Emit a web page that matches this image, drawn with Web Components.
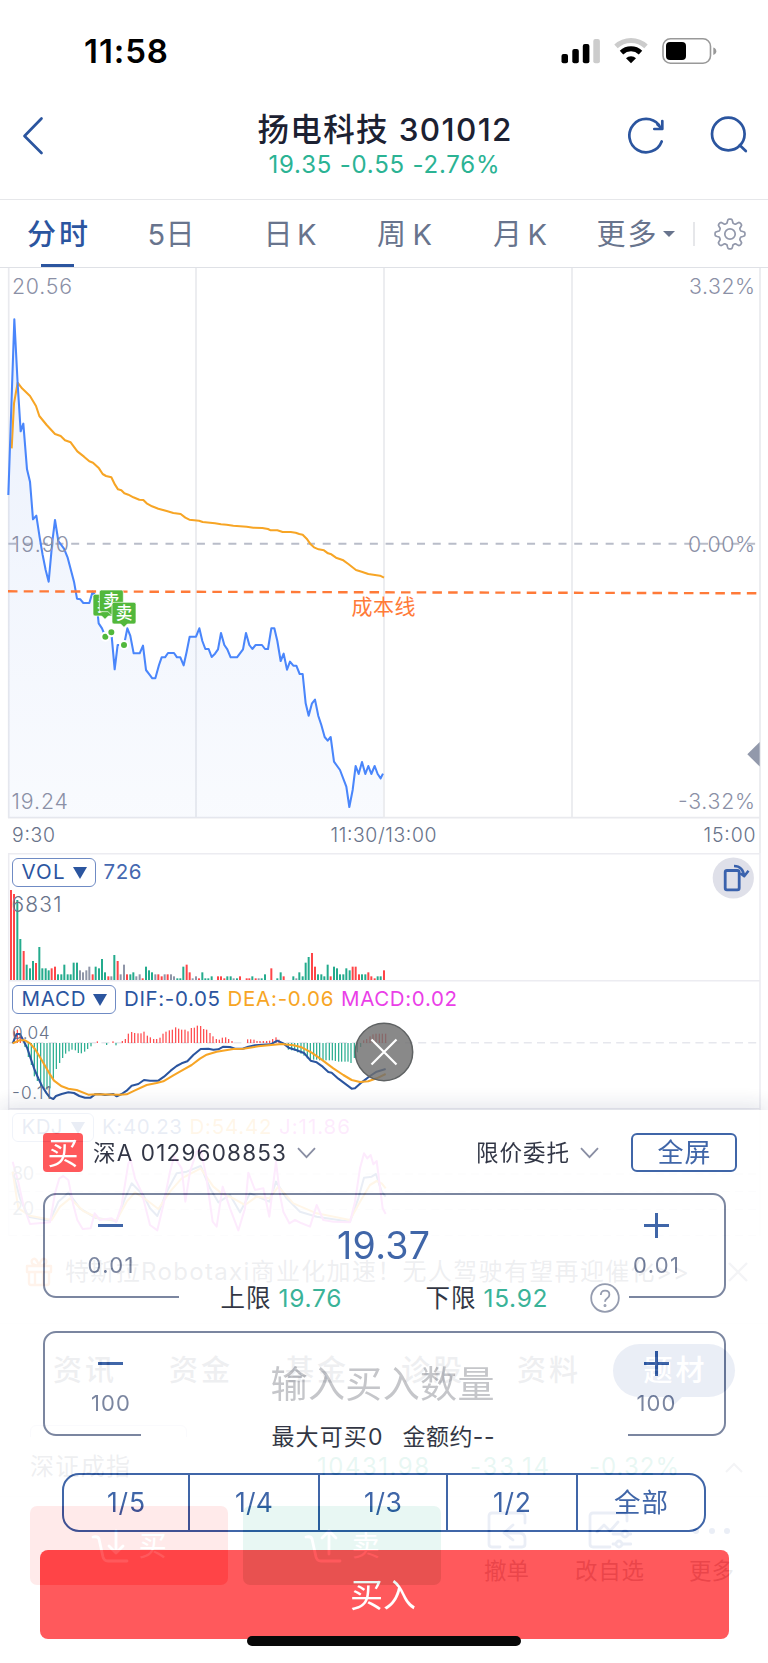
<!DOCTYPE html>
<html lang="zh-CN">
<head>
<meta charset="utf-8">
<title>扬电科技 301012</title>
<style>
	body {
		margin: 0;
		background: #fff;
		font-family: Inter, "Noto Sans CJK SC", sans-serif;
		line-height: 1;
	}
</style>
</head>
<body>
<stock-screen></stock-screen>

<script>
const define = (name, cls) => {
	if (!window.customElements.get(name)) {
		window.customElements.define(name, cls);
	}
};

// small base class: markup() goes in an open shadow root
class Part extends HTMLElement {
	constructor() {
		super();
		this.attachShadow({ mode: 'open' });
	}

	connectedCallback() {
		this.shadowRoot.innerHTML = this.markup();
	}
}

// one line of text, tracked so that it fills the width in `w`
define('fit-text', class extends Part {
	markup() {
		return `
		<style>
		:host { display: inline-block; white-space: nowrap; flex: none; }
		</style>
		<span><slot></slot></span>`;
	}

	connectedCallback() {
		super.connectedCallback();
		const w = Number(this.getAttribute('w'));
		const count = [...this.textContent].length;
		const span = this.shadowRoot.querySelector('span');
		if (w && count > 1) {
			const natural = span.getBoundingClientRect().width;
			span.style.letterSpacing = (w - natural) / (count - 1) + 'px';
			this.style.width = w + 'px';
		}
	}
});

define('status-bar', class extends Part {
	markup() {
		return `
		<style>
		:host { display: flex; align-items: center; height: 102px; padding: 0 51px 0 84px; box-sizing: border-box; }
		fit-text { font-size: 33px; font-weight: 600; color: #000; }
		svg { margin-left: auto; }
		</style>
		<fit-text w="84">11:58</fit-text>
		<svg width="156" height="28" viewBox="561 37 156 28">
			<rect x="561.5" y="54" width="6.5" height="9.3" rx="2"/>
			<rect x="572.3" y="49" width="6.5" height="14.3" rx="2"/>
			<rect x="582.8" y="44" width="6.6" height="19.3" rx="2"/>
			<rect x="593.3" y="39" width="6.6" height="24.3" rx="2" fill="#ccc"/>
			<g fill="none">
				<path d="M616 46.3a22 22 0 0 1 30 0" stroke="#ccc" stroke-width="5"/>
				<path d="M621.5 52.6a13.8 13.8 0 0 1 19 0" stroke="#000" stroke-width="5"/>
			</g>
			<path d="M631 63.3l-5-5a7 7 0 0 1 10 0z"/>
			<rect x="663" y="38.8" width="47.5" height="24.4" rx="7.5" fill="none" stroke="#999" stroke-width="1.6"/>
			<rect x="666" y="42" width="20" height="18" rx="4"/>
			<path d="M713.3 47.5q3 1 3 3.7t-3 3.7z" fill="#999"/>
		</svg>`;
	}
});

define('quote-header', class extends Part {
	markup() {
		return `
		<style>
		:host { display: grid; grid-template-columns: 1fr auto 1fr; height: 98px; padding: 10px 20px 0 21px; box-sizing: border-box; border-bottom: 1.5px solid #e6e7ea; }
		.title { display: grid; justify-items: center; grid-auto-rows: 35px; align-items: center; }
		.name { font-size: 31.5px; font-weight: 500; color: #1c2132; }
		.quote { font-size: 24px; color: #2bb394; margin-right: 1px; }
		.icons { justify-self: end; display: flex; gap: 44px; }
		svg { display: block; fill: none; stroke: #2b559f; stroke-width: 2.7; stroke-linecap: round; stroke-linejoin: round; }
		</style>
		<svg width="24" height="46" viewBox="21 112 24 46"><path d="M41.5 118.5L24.5 136l17 17"/></svg>
		<div class="title">
			<fit-text class="name" w="254">扬电科技 301012</fit-text>
			<fit-text class="quote" w="231">19.35 -0.55 -2.76%</fit-text>
		</div>
		<div class="icons">
			<svg width="38" height="46" viewBox="628 112 38 46">
				<path d="M661.7 141.5a16.7 16.7 0 1 1-2.8-16.6M662.3 121v8h-8M657.5 124.5l4.5 4"/>
			</svg>
			<svg width="38" height="46" viewBox="710 112 38 46">
				<circle cx="728.3" cy="134" r="16.3"/><path d="M739.8 145.3l6 5.7"/>
			</svg>
		</div>`;
	}
});

define('period-tabs', class extends Part {
	markup() {
		let teeth = '';
		for (let i = 0; i <= 96; i++) {
			const a = i / 96 * Math.PI * 2;
			const r = 13 + 2 * Math.tanh(2.2 * Math.cos(a * 8));
			teeth += (i ? 'L' : 'M') + (Math.sin(a) * r).toFixed(2) + ' ' + (-Math.cos(a) * r).toFixed(2);
		}
		return `
		<style>
		:host { display: grid; grid-template-columns: 115px 112px 126px 103px 128px 109px 1fr; height: 67px; border-bottom: 1.5px solid #dfe1e6; font-size: 29px; color: #68748d; }
		div { display: flex; align-items: center; justify-content: center; }
		fit-text { padding-top: 2px; }
		.on { color: #2b559f; font-weight: 500; background: linear-gradient(#2b559f, #2b559f) bottom / 33px 3px no-repeat; }
		.more { padding-right: 6px; gap: 6px; }
		.more i { border: 6px solid transparent; border-top: 6.5px solid #68748d; border-bottom: 0; }
		.gear::before { content: ""; width: 1.5px; height: 24px; background: #e6e7ea; margin-right: 18.5px; }
		.gear { justify-content: start; }
		</style>
		<div class="on"><fit-text w="61">分时</fit-text></div>
		<div><fit-text w="47">5日</fit-text></div>
		<div><fit-text w="53">日K</fit-text></div>
		<div><fit-text w="55">周K</fit-text></div>
		<div><fit-text w="54">月K</fit-text></div>
		<div class="more"><fit-text w="60">更多</fit-text><i></i></div>
		<div class="gear">
			<svg width="34" height="34" viewBox="-17 -17 34 34" fill="none" stroke="#9298ab" stroke-width="1.7">
				<path d="${teeth}z"/><circle r="5.2"/>
			</svg>
		</div>`;
	}
});

// line series are kept in thirds of a pixel, as x,y pairs
const AVERAGE = '35,565 42,430 53,368 66,385 90,408 108,438 118,468 140,495 165,522 182,528 195,541 212,547 232,574 252,590 268,604 279,608 297,625 308,642 318,648 334,652 345,674 354,688 364,691 373,700 385,704 400,712 418,719 430,720 440,730 456,739 475,746 500,753 520,759 542,762 556,773 568,779 597,782 608,786 645,790 663,793 680,794 700,797 740,800 760,803 787,804 804,807 812,811 832,811 848,816 872,816 887,818 898,822 908,824 920,836 932,853 942,862 956,868 972,871 984,880 994,883 1008,893 1030,901 1045,912 1068,930 1085,935 1105,942 1140,947 1152,953';
const PRICE = '25,705 34,440 43,178 53,372 62,514 70,491 81,628 90,665 99,778 109,767 119,832 128,885 137,930 146,965 157,845 165,780 175,843 192,866 203,893 222,965 231,1016 241,1018 250,1029 268,1029 278,995 288,1010 296,1090 306,1105 316,1130 334,1117 344,1228 353,1155 372,1155 382,1105 391,1128 401,1180 419,1180 429,1157 438,1230 448,1243 457,1255 466,1255 477,1215 485,1192 495,1192 504,1179 522,1179 531,1192 541,1192 551,1216 560,1175 569,1130 588,1130 598,1105 607,1143 616,1167 626,1167 635,1191 645,1181 654,1168 663,1119 673,1155 682,1168 692,1192 711,1192 729,1168 738,1119 748,1155 757,1167 767,1155 786,1155 795,1167 804,1167 814,1105 823,1105 832,1143 842,1203 851,1181 861,1229 870,1205 880,1217 889,1217 899,1242 908,1242 917,1330 926,1367 936,1330 945,1319 955,1368 964,1395 974,1431 983,1442 992,1431 1002,1505 1020,1530 1039,1580 1048,1641 1058,1590 1067,1518 1076,1542 1086,1506 1096,1542 1105,1518 1114,1542 1124,1518 1133,1542 1142,1555 1149,1541';

define('price-chart', class extends Part {
	flag(x, y, tip) {
		return `<g transform="translate(${x} ${y})">
			<path d="M6 0h60q6 0 6 6v53q0 6-6 6H${tip + 10}l-10 10-10-10H6q-6 0-6-6V6q0-6 6-6z" fill="#52b83b" stroke="#fff" stroke-width="2"/>
			<text x="36" y="50" text-anchor="middle" font-size="50" font-weight="500" fill="#fff">卖</text>
		</g>`;
	}

	markup() {
		return `
		<style>
		:host { display: block; }
		svg { display: block; font-weight: 300; }
		.axis { font-size: 21.3px; fill: #8b90a6; }
		.time { font-size: 19.4px; fill: #68738a; }
		</style>
		<svg width="768" height="585" viewBox="0 268 768 585">
			<defs>
				<linearGradient id="area" x1="0" y1="0" x2="0" y2="1">
					<stop offset="0" stop-color="#4a80e8" stop-opacity=".11"/>
					<stop offset="1" stop-color="#4a80e8" stop-opacity=".035"/>
				</linearGradient>
			</defs>
			<path d="M8.7 268V818M196 268V818M384 268V818M572 268V818M760 268V853M8 817.7H760" fill="none" stroke="#e9eaee" stroke-width="1.7"/>
			<path d="M8.3 543.7H756" stroke="#b9bdc9" stroke-width="1.9" stroke-dasharray="8 7.72"/>
			<g transform="translate(0 260) scale(.33333)" fill="none" stroke-linejoin="round">
				<polygon points="${PRICE} 1149,1673 25,1673" fill="url(#area)"/>
				<polyline points="${AVERAGE}" stroke="#f7a525" stroke-width="6.2"/>
				<polyline points="${PRICE}" stroke="#4a86fb" stroke-width="6.2"/>
			</g>
			<path d="M8 591.3L757 593.3" stroke="#ff7a38" stroke-width="2.4" stroke-dasharray="9.5 6.22"/>
			<g transform="translate(0 260) scale(.33333)">
				<g fill="#52b83b" stroke="#fff" stroke-width="6">
					<circle cx="316" cy="1130" r="12"/><circle cx="334" cy="1117" r="12"/><circle cx="372" cy="1155" r="12"/>
				</g>
				${this.flag(279, 1003, 36)}
				${this.flag(298, 990, 36)}
				${this.flag(336, 1027, 36)}
			</g>
			<g class="axis">
				<text x="12" y="293.6" textLength="60">20.56</text>
				<text x="11.5" y="551.6" textLength="57.5">19.90</text>
				<text x="11.5" y="809.3" textLength="56.5">19.24</text>
				<text x="689" y="293.6" textLength="66">3.32%</text>
				<text x="688" y="551.6" textLength="67">0.00%</text>
				<text x="678" y="809.3" textLength="77">-3.32%</text>
			</g>
			<g class="time">
				<text x="12" y="841.7" textLength="43">9:30</text>
				<text x="330.5" y="841.7" textLength="106">11:30/13:00</text>
				<text x="703.5" y="841.7" textLength="52">15:00</text>
			</g>
			<text x="351.5" y="614" font-size="21" font-weight="400" fill="#ff7a38" textLength="64">成本线</text>
			<path d="M747.3 754.3L759.7 742v24.5z" fill="#9299ab"/>
		</svg>`;
	}
});

// indicator strip: name pill, slotted readings, plot drawn behind them
define('indicator-panel', class extends Part {
	markup() {
		const top = Number(this.getAttribute('top'));
		const height = Number(this.getAttribute('height'));
		return `
		<style>
		:host { display: grid; height: ${height}px; }
		:host > * { grid-area: 1 / 1; }
		svg.plot { display: block; }
		header { display: flex; align-items: center; align-self: start; height: 29px; margin: 5px 0 0 12px; font-size: 20.5px; }
		.pill { box-sizing: border-box; height: 29px; display: flex; align-items: center; justify-content: space-between; padding: 0 8px 0 8.5px; border: 1.5px solid #6f8bc4; border-radius: 6px; color: #2b559f; margin-right: 8px; }
		.pill i { border: 7px solid transparent; border-top: 12px solid #2b559f; border-bottom: 0; }
		</style>
		<svg class="plot" width="768" height="${height}" viewBox="0 ${top} 768 ${height}">
			<path d="M8.7 ${top}V${top + height}M760 ${top}V${top + height}M8 ${top + .7}H760" fill="none" stroke="#ececf1" stroke-width="1.5"/>
			${this.plot(top)}
		</svg>
		<header>
			<div class="pill" style="width:${this.getAttribute('pill')}px">
				<fit-text w="${this.getAttribute('label-width')}">${this.getAttribute('label')}</fit-text><i></i>
			</div>
			<slot></slot>
		</header>`;
	}

	plot() {
		return '';
	}
});

const Panel = customElements.get('indicator-panel');
const INK = { r: '#ff4548', g: '#24ab8d', k: '#8f96a8', b: '#2b559f', y: '#f7a525', p: '#ea3fe8' };

const bars = (data, zero, width, dir) => data.split(' ').map(item => {
	const [, ink, x, h] = item.match(/([a-z])(\d+):(\d+)/);
	const up = dir || ink === 'r';
	return `<rect x="${x - width / 2}" y="${up ? zero - h : zero}" width="${width}" height="${h}" fill="${INK[ink]}"/>`;
}).join('');

const line = (points, ink) => `<polyline points="${points}" fill="none" stroke="${INK[ink]}" stroke-width="6.2" stroke-linejoin="round"/>`;

define('volume-panel', class extends Panel {
	plot() {
		const data = 'r33:271 r42:259 g52:241 g61:124 r71:88 g80:47 g90:36 g99:58 r108:52 g118:100 g127:36 g137:36 g146:30 r155:36 r165:41 g174:18 g184:18 g193:47 g203:18 g212:18 g221:53 g231:53 k240:30 k249:24 k259:30 k268:41 r278:18 g287:41 g297:36 g306:64 g315:24 r325:12 k334:12 g343:76 r353:58 k362:18 k372:47 r381:18 g391:18 g400:24 k409:12 k419:18 r428:6 g438:41 g447:30 g456:24 k466:18 r475:18 r485:12 k494:18 r503:18 k513:18 k522:12 g532:6 g541:6 g550:41 r560:47 r569:24 k578:6 k588:12 r597:6 g607:24 g616:6 g625:6 g635:12 r654:12 r663:12 r673:6 g682:12 g692:12 k701:6 g711:6 r720:12 r740:6 r748:6 g757:12 r767:6 k776:6 g785:6 g795:18 r814:36 g832:6 g842:24 r851:12 g880:12 k889:6 g898:24 g908:12 g917:53 g926:70 r936:82 r945:41 g954:18 g964:18 g973:12 g983:47 r992:12 g1002:41 g1011:36 g1020:18 g1030:18 g1039:36 g1049:30 r1058:41 r1067:41 r1077:18 g1086:18 g1096:18 r1105:24 r1114:12 r1124:6 g1133:12 g1142:12 r1152:30';
		return `<g transform="translate(0 850) scale(.33333)">${bars(data, 391, 6, true)}</g>
			<text x="11.5" y="912.4" font-size="21" font-weight="300" fill="#68738a" textLength="50">6831</text>
			<circle cx="733.3" cy="878" r="20.6" fill="#dfe0e9"/>
			<g fill="none" stroke="#3a62ad" stroke-width="2.8" stroke-linejoin="round">
				<rect x="725.2" y="870.5" width="14" height="19.3" rx="1.8"/>
				<path d="M734 866q9 0 10.2 10.5M748.5 870.8l-4.3 5.5-4-3" stroke-width="2.5"/>
			</g>`;
	}
});

define('macd-panel', class extends Panel {
	plot() {
		const data = 'r43:35 r52:40 r61:30 g75:12 g85:42 g94:66 g103:100 g112:114 g122:130 g132:137 g141:140 g150:136 g160:108 g169:78 g179:60 g188:45 g197:32 g207:25 g216:20 g226:22 g235:30 g244:31 g254:26 g263:18 g273:10 r292:5 g320:6 r339:5 g348:7 r367:6 r376:12 r385:28 r395:33 r404:30 r414:29 r423:29 r432:34 r442:22 r451:17 r461:12 r470:12 r480:16 r489:28 r498:34 r508:38 r517:40 r527:47 r536:43 r545:40 r555:40 r564:35 r574:45 r583:46 r592:52 r602:51 r611:42 r620:40 r630:30 r639:20 r649:12 r658:10 r667:16 r677:17 r686:12 r696:6 r743:11 r752:11 r762:10 r771:6 r780:6 r790:6 r800:6 r809:7 r818:12 r828:17 r837:10 g856:5 g865:20 g875:22 g884:22 g893:28 g903:32 g912:38 g922:46 g931:52 g941:50 g950:50 g959:52 g969:52 g978:52 g988:52 g997:52 g1006:54 g1016:56 g1025:56 g1035:56 g1044:56 g1053:60 g1063:45 g1072:28 g1082:12 r1091:8 r1100:12 r1110:20 r1119:26 r1128:28 r1138:28 r1147:28 r1157:28';
		return `<path d="M9 1042.7H760" stroke="#e6e7ed" stroke-width="1.5" stroke-dasharray="8 5.2"/>
			<g transform="translate(0 850) scale(.33333)">
				${bars(data, 579, 3.6, false)}
				${line('38,580 50,552 60,552 72,575 82,595 92,625 104,660 115,685 126,708 140,730 150,743 160,747 168,738 185,732 205,727 222,729 238,738 255,743 272,743 285,733 300,732 315,735 340,732 350,739 365,732 380,722 395,707 415,702 432,690 450,692 475,692 492,680 512,662 530,648 545,640 562,634 580,615 602,597 625,596 640,599 655,598 670,590 690,591 705,596 728,596 745,590 765,586 812,583 832,572 850,580 866,593 890,601 912,609 932,632 950,637 968,650 985,666 995,668 1015,686 1030,697 1055,716 1065,715 1085,697 1110,678 1130,665 1157,657', 'b')}
				${line('38,580 58,571 75,571 90,580 105,597 125,630 148,670 162,692 185,709 205,716 230,720 265,734 290,733 360,734 380,733 405,721 440,705 470,699 490,694 520,676 545,662 575,645 600,626 620,614 650,605 700,597 730,596 775,589 845,582 880,586 905,592 935,608 965,629 1000,655 1030,675 1055,690 1080,696 1105,694 1130,685 1157,672', 'y')}
			</g>
			<g font-size="17.3" font-weight="300" fill="#68738a">
				<text x="12" y="1039.2" textLength="37.5">0.04</text>
				<text x="12" y="1098.6" textLength="39.5">-0.11</text>
			</g>`;
	}
});

define('kdj-panel', class extends Panel {
	plot() {
		return `<path d="M9 1174H760M9 1191.5H760M9 1209.5H760M9 1235.5H760" stroke="#e0e2e8" stroke-width="1.5" stroke-dasharray="8 5.2"/>
			<g transform="translate(0 1105) scale(.33333)">
				${line('38,200 60,280 85,335 150,347 175,290 205,263 240,310 285,338 350,348 375,280 395,235 430,270 450,310 472,333 500,260 530,205 560,200 602,183 630,250 655,292 690,270 720,322 750,265 808,290 828,230 860,280 900,320 950,335 1050,350 1075,280 1092,218 1115,215 1128,207 1145,260 1157,275', 'b')}
				${line('38,200 55,310 90,332 155,345 180,305 210,280 250,318 300,342 350,345 380,290 405,262 440,285 475,312 510,260 545,220 602,190 640,245 665,265 700,280 735,300 770,275 808,280 835,245 880,295 950,325 1050,345 1080,290 1110,240 1130,228 1145,235 1157,250', 'y')}
				${line('38,170 55,232 70,300 90,357 150,352 165,265 178,220 190,213 205,225 220,300 232,345 248,372 272,370 284,325 300,345 335,340 348,352 365,300 385,175 392,165 405,220 425,262 450,360 472,376 490,300 510,200 522,155 545,190 556,290 570,200 590,140 602,135 618,210 638,350 650,365 668,245 690,310 715,376 735,310 745,203 765,255 790,250 808,335 828,170 840,270 850,320 868,355 885,345 905,355 930,365 950,300 970,345 1000,350 1050,352 1065,290 1080,190 1092,145 1102,160 1112,150 1120,178 1130,168 1148,310 1157,327', 'p')}
			</g>
			<g font-size="18" fill="#68738a">
				<text x="12" y="1180" textLength="22">80</text>
				<text x="12" y="1215" textLength="22">20</text>
			</g>`;
	}
});

define('news-bar', class extends Part {
	markup() {
		return `
		<style>
		:host { display: flex; align-items: center; height: 87px; padding: 0 20px 15px 25px; box-sizing: border-box; font-size: 24px; color: #5c6274; }
		fit-text { margin-left: 12px; }
		.close { margin-left: auto; }
		svg { fill: none; stroke-width: 2.4; stroke-linejoin: round; flex: none; }
		</style>
		<svg width="28" height="30" viewBox="0 0 28 30" stroke="#ff8a3c">
			<path d="M2 9h24v6H2zM4 15h20v11q0 2-2 2H6q-2 0-2-2zM10 15v13M18 15v13M14 9Q5 8 7 3q4-4 7 6 3-10 7-6 2 5-7 6"/>
		</svg>
		<fit-text w="624">特斯拉Robotaxi商业化加速！无人驾驶有望再迎催化&gt;&gt;</fit-text>
		<svg class="close" width="20" height="20" viewBox="0 0 20 20" stroke="#8b90a6"><path d="M1 1l18 18M19 1L1 19"/></svg>`;
	}
});

define('info-tabs', class extends Part {
	markup() {
		return `
		<style>
		:host { display: block; height: 114px; border-top: 1px solid #f0f0f0; box-sizing: border-box; background: #fafafa; font-size: 29px; font-weight: 500; color: #5c6274; overflow: hidden; }
		nav { display: flex; align-items: center; height: 93px; padding-left: 53px; gap: 55px; }
		.on { display: flex; flex-direction: column; align-items: center; width: 122px; height: 53px; margin-left: -20px; border-radius: 27px; background: #3556a5; color: #fff; }
		.on fit-text { line-height: 53px; }
		.on::after { content: ""; border: 8px solid transparent; border-top-color: #3556a5; border-bottom: 0; }
		.card { height: 20px; width: 157px; margin: 8px 0 0 30px; box-sizing: border-box; border: 1.5px solid #c9cde4; border-radius: 6px; }
		</style>
		<nav>
			<fit-text w="61">资讯</fit-text>
			<fit-text w="61">资金</fit-text>
			<fit-text w="61">基金</fit-text>
			<fit-text w="61">诊股</fit-text>
			<fit-text w="61">资料</fit-text>
			<div class="on"><fit-text w="61">题材</fit-text></div>
		</nav>
		<div class="card"></div>`;
	}
});

define('market-row', class extends Part {
	markup() {
		return `
		<style>
		:host { display: flex; align-items: center; height: 60px; padding: 1px 25px 0 30px; box-sizing: border-box; border-bottom: 1px solid #eee; font-size: 24px; color: #5c6274; }
		.n { color: #24ab8d; }
		svg { margin-left: auto; }
		</style>
		<fit-text w="100">深证成指</fit-text>
		<fit-text class="n" w="112" style="margin-left:187px">10431.98</fit-text>
		<fit-text class="n" w="79" style="margin-left:41px">-33.14</fit-text>
		<fit-text class="n" w="90" style="margin-left:40px">-0.32%</fit-text>
		<svg width="18" height="11" viewBox="0 0 18 11" fill="none" stroke="#8b90a6" stroke-width="2"><path d="M1 10l8-8 8 8"/></svg>`;
	}
});

define('action-bar', class extends Part {
	markup() {
		return `
		<style>
		:host { display: flex; height: 166px; padding: 9px 0 0 30px; box-sizing: border-box; font-size: 22.5px; color: #333a4f; }
		.trade { display: flex; align-items: center; justify-content: center; gap: 10px; width: 197.5px; height: 79px; margin-right: 15.5px; border-radius: 7px; color: #fff; font-size: 28px; }
		.buy { background: #ff3335; }
		.sell { background: #24ab8d; }
		.item { display: flex; flex-direction: column; align-items: center; padding-top: 5px; gap: 11px; }
		svg { fill: none; stroke: #3556a5; stroke-width: 2.8; stroke-linecap: round; stroke-linejoin: round; }
		.trade svg { stroke: #fff; }
		</style>
		<div class="trade buy">
			<svg width="38" height="34" viewBox="0 0 38 34"><path d="M2 8q5-1 6 2l4 18q1 4 5 4h19M25 2v22M18 17l7 7 7-7"/></svg>
			<span>买</span>
		</div>
		<div class="trade sell">
			<svg width="38" height="34" viewBox="0 0 38 34"><path d="M2 8q5-1 6 2l4 18q1 4 5 4h19M25 25V2M18 9l7-7 7 7"/></svg>
			<span>卖</span>
		</div>
		<div class="item" style="margin-left:28px">
			<svg width="40" height="38" viewBox="0 0 40 38"><path d="M38 12V5q0-3-3-3H5Q2 2 2 5v28q0 3 3 3h8M26 14l-9 8 9 7M18 22h14q6 0 6 6v5q0 3-3 3H23"/></svg>
			<fit-text w="45">撤单</fit-text>
		</div>
		<div class="item" style="margin-left:46px">
			<svg width="44" height="38" viewBox="0 0 44 38"><path d="M39 10V5q0-3-3-3H5Q2 2 2 5v28q0 3 3 3h17M9 21l7-7 6 6 8-9M25 23h18M25 33h18"/><circle cx="37" cy="23" r="3" fill="#fff"/><circle cx="31" cy="33" r="3" fill="#fff"/></svg>
			<fit-text w="69">改自选</fit-text>
		</div>
		<div class="item" style="margin-left:45px">
			<svg width="40" height="38" viewBox="0 0 40 38"><g fill="#3556a5" stroke="none"><circle cx="4" cy="20" r="3"/><circle cx="20" cy="20" r="3"/><circle cx="35" cy="20" r="3"/></g></svg>
			<fit-text w="45">更多</fit-text>
		</div>`;
	}
});

// bordered box with - / + on the sides; the note slot breaks its bottom edge
define('stepper-field', class extends Part {
	markup() {
		const step = this.getAttribute('step');
		const w = this.getAttribute('step-width');
		return `
		<style>
		:host { display: block; }
		.box { box-sizing: border-box; height: 105px; border: 2px solid #6d7996; border-radius: 13px; display: grid; grid-template-columns: 132px 1fr 135px; }
		.step { display: flex; flex-direction: column; align-items: center; padding-top: 18px; gap: 14px; font-size: 22px; color: #6d7996; }
		.step fit-text { line-height: 26px; }
		.value { display: flex; align-items: center; justify-content: center; }
		.note { position: relative; display: flex; align-items: center; height: 34px; margin-top: -17px; background: #fff; }
		svg { display: block; stroke: #2b559f; stroke-width: 3; }
		</style>
		<div class="box">
			<div class="step"><svg width="25" height="25"><path d="M0 12.5h25"/></svg><fit-text w="${w}">${step}</fit-text></div>
			<div class="value"><slot></slot></div>
			<div class="step"><svg width="25" height="25"><path d="M0 12.5h25M12.5 0v25"/></svg><fit-text w="${w}">${step}</fit-text></div>
		</div>
		<div class="note" style="margin-left:${this.getAttribute('gap-start')}px;width:${this.getAttribute('gap-width')}px"><slot name="note"></slot></div>`;
	}
});

define('ratio-bar', class extends Part {
	markup() {
		return `
		<style>
		:host { display: grid; grid-template-columns: 124px 130px 128px 130px 1fr; box-sizing: border-box; height: 59px; border: 2px solid #2b559f; border-radius: 17px; font-size: 26.5px; color: #2b559f; }
		div { display: flex; align-items: center; justify-content: center; }
		div + div { border-left: 2px solid #2b559f; }
		</style>
		<div><fit-text w="38">1/5</fit-text></div>
		<div><fit-text w="38">1/4</fit-text></div>
		<div><fit-text w="38">1/3</fit-text></div>
		<div><fit-text w="38">1/2</fit-text></div>
		<div><fit-text w="54">全部</fit-text></div>`;
	}
});

define('order-sheet', class extends Part {
	markup() {
		const chevron = '<svg class="chev" width="19" height="12" viewBox="0 0 19 12"><path d="M1 1.2l8.5 9 8.5-9"/></svg>';
		return `
		<style>
		:host { display: flex; flex-direction: column; box-sizing: border-box; padding-top: 23px; background: #fff; opacity: .9; box-shadow: 0 -2px 22px rgba(50, 60, 95, .19); color: #1a1f30; }
		header { display: flex; align-items: center; height: 39px; padding: 0 31px 0 43px; font-size: 22.5px; }
		header fit-text { padding-top: 1px; }
		.badge { display: flex; align-items: center; justify-content: center; width: 40px; height: 39px; border-radius: 4px; background: #ff474a; color: #fff; font-size: 31px; margin-right: 10px; }
		.chev { fill: none; stroke: #7c8299; stroke-width: 1.8; margin-left: 11px; }
		.full { margin-left: auto; display: flex; align-items: center; justify-content: center; box-sizing: border-box; width: 106px; height: 39px; border: 2px solid #2b559f; border-radius: 6px; color: #2b559f; font-size: 26px; }
		stepper-field { margin: 21px 42.5px 0; }
		.qty-field { margin-top: 16px; }
		.price { font-size: 37.5px; color: #2b559f; margin-left: 2px; }
		.hint { font-size: 37px; color: #bfc0c4; padding-top: 2px; }
		.row { display: flex; align-items: center; font-size: 24.5px; }
		.green { color: #24ab8d; }
		.ask { fill: none; stroke: #8991a6; stroke-width: 1.8; }
		.qty { font-size: 23px; padding-top: 3px; }
		ratio-bar { margin: 20px 62px 18px; }
		.submit { display: flex; align-items: center; justify-content: center; margin: 0 39.5px; padding-right: 2px; height: 89px; border-radius: 8px; background: #ff474a; color: #fff; font-size: 33px; }
		.submit fit-text { padding-top: 1px; }
		</style>
		<header>
			<div class="badge">买</div>
			<fit-text w="193">深A 0129608853</fit-text>
			${chevron}
			<fit-text w="93" style="margin-left:160px">限价委托</fit-text>
			${chevron}
			<div class="full"><fit-text w="53">全屏</fit-text></div>
		</header>
		<stepper-field step="0.01" step-width="46" gap-start="136" gap-width="450">
			<fit-text class="price" w="93">19.37</fit-text>
			<div slot="note" class="row">
				<fit-text w="50" style="margin-left:42px">上限</fit-text>
				<fit-text class="green" w="63" style="margin-left:8px">19.76</fit-text>
				<fit-text w="50" style="margin-left:84px">下限</fit-text>
				<fit-text class="green" w="64" style="margin-left:8px">15.92</fit-text>
				<svg class="ask" style="margin-left:42px" width="30" height="30" viewBox="0 0 30 30"><circle cx="15" cy="15" r="13.8"/><path d="M10.8 12q0-4.3 4.3-4.3t4.3 4q0 2.2-2.4 3.7-2 1.3-2 3.4"/><circle cx="15" cy="22.5" r=".6"/></svg>
			</div>
		</stepper-field>
		<stepper-field class="qty-field" step="100" step-width="39" gap-start="98" gap-width="487">
			<fit-text class="hint" w="224">输入买入数量</fit-text>
			<div slot="note" class="row qty">
				<fit-text w="111" style="margin-left:131px">最大可买0</fit-text>
				<fit-text w="92" style="margin-left:20px">金额约--</fit-text>
			</div>
		</stepper-field>
		<ratio-bar></ratio-bar>
		<div class="submit"><fit-text w="66">买入</fit-text></div>`;
	}
});

define('stock-screen', class extends Part {
	markup() {
		return `
		<style>
		:host { display: block; position: relative; width: 768px; height: 1663px; overflow: hidden; background: #fff; }
		order-sheet { position: absolute; left: 0; right: 0; top: 1110px; bottom: 0; }
		.close { position: absolute; left: 354px; top: 1021.5px; }
		.home { position: absolute; left: 247px; top: 1636px; width: 274px; height: 10px; border-radius: 5px; background: #080808; }
		.b { color: #4468b0; }
		.d { color: #2b559f; }
		.y { color: #f7a525; }
		.p { color: #ea3fe8; }
		volume-panel fit-text, macd-panel fit-text, kdj-panel fit-text { margin-right: 7.5px; }
		</style>
		<status-bar></status-bar>
		<quote-header></quote-header>
		<period-tabs></period-tabs>
		<price-chart></price-chart>
		<volume-panel top="853" height="127" label="VOL" label-width="43" pill="83.5">
			<fit-text class="b" w="38">726</fit-text>
		</volume-panel>
		<macd-panel top="980" height="128" label="MACD" label-width="64" pill="104">
			<fit-text class="d" w="96">DIF:-0.05</fit-text>
			<fit-text class="y" w="106">DEA:-0.06</fit-text>
			<fit-text class="p" w="116">MACD:0.02</fit-text>
		</macd-panel>
		<kdj-panel top="1108" height="128" label="KDJ" label-width="41" pill="82">
			<fit-text class="d" w="80">K:40.23</fit-text>
			<fit-text class="y" w="82">D:54.42</fit-text>
			<fit-text class="p" w="71">J:11.86</fit-text>
		</kdj-panel>
		<news-bar></news-bar>
		<info-tabs></info-tabs>
		<market-row></market-row>
		<action-bar></action-bar>
		<order-sheet></order-sheet>
		<svg class="close" width="60" height="60" viewBox="0 0 60 60">
			<circle cx="30" cy="30" r="28.7" fill="#6f6f6f" fill-opacity=".82" stroke="#5f6263" stroke-width="1.5"/>
			<path d="M17.5 17.5l25 25M42.5 17.5l-25 25" stroke="#fff" stroke-width="2.2"/>
		</svg>
		<div class="home"></div>`;
	}
});
</script>
</body>
</html>
